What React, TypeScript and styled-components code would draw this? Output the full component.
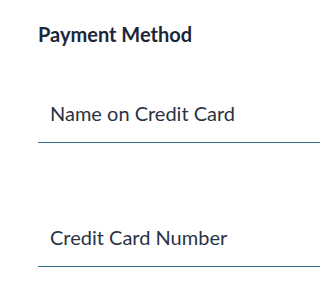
import React from "react";
import styled, { createGlobalStyle } from "styled-components";

const GlobalStyle = createGlobalStyle`
  html, body {
    margin: 0;
    padding: 0;
    background: #ffffff;
  }
  body {
    font-family: Lato, "Open Sans", sans-serif;
  }
`;

export default function App() {
  return (
    <>
      <GlobalStyle />
      <Section>
        <Title>Payment Method</Title>
        <Field>
          <Label>Name on Credit Card</Label>
        </Field>
        <Field>
          <Label>Credit Card Number</Label>
        </Field>
      </Section>
    </>
  );
}

const Section = styled.div`
  display: flex;
  flex-direction: column;
  padding: 22px 0 0 38px;
`;

const Title = styled.h2`
  margin: 0;
  font-size: 20px;
  line-height: 1.2;
  font-weight: 700;
  color: #1c2638;
`;

const Field = styled.div`
  margin-top: 55px;
  padding: 0 0 17px 12px;
  border-bottom: 1.5px solid #2f6a89;

  & + & {
    margin-top: 82px;
  }
`;

const Label = styled.div`
  font-size: 20px;
  line-height: 1.2;
  color: #2b3343;
`;
